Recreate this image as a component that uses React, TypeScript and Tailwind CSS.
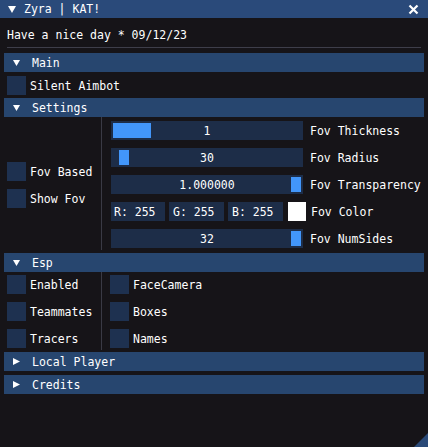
import React from 'react';

type SliderProps = { value: string; label: string; grabLeft: number; grabWidth: number };

const Slider: React.FC<SliderProps> = ({ value, label, grabLeft, grabWidth }) => (
  <div className="flex items-center h-[19px]">
    <div className="relative w-[192px] h-[19px] bg-[#1d2d48] flex items-center justify-center">
      <div
        className="absolute top-[2px] h-[15px] bg-[#4296fa]"
        style={{ left: grabLeft, width: grabWidth }}
      ></div>
      <span className="relative">{value}</span>
    </div>
    <span className="ml-[7px] whitespace-nowrap">{label}</span>
  </div>
);

const Checkbox: React.FC<{ label: string }> = ({ label }) => (
  <div className="flex items-center h-[19px]">
    <div className="w-[19px] h-[19px] bg-[#1e3150] shrink-0"></div>
    <span className="ml-[4px] whitespace-nowrap">{label}</span>
  </div>
);

const Header: React.FC<{ title: string; open?: boolean; className?: string }> = ({ title, open, className }) => (
  <div className={`-mx-[3px] h-[19px] bg-[#27466f] flex items-center pl-[9px] ${className ?? ''}`}>
    {open ? (
      <svg width="7" height="6" viewBox="0 0 7 6">
        <polygon points="0,0 7,0 3.5,6" fill="#fff" />
      </svg>
    ) : (
      <svg width="7" height="7" viewBox="0 0 7 7">
        <polygon points="0,0 7,3.5 0,7" fill="#fff" />
      </svg>
    )}
    <span className="ml-[12px]">{title}</span>
  </div>
);

const App: React.FC = () => {
  return (
    <div className="relative w-[428px] h-[447px] overflow-hidden bg-[#161418] text-white text-[11.5px] leading-[16px] font-['DejaVu_Sans_Mono',monospace]">
      {/* title bar */}
      <div className="flex items-center h-[18px] bg-[#2a4a7a] pl-[8px] pr-[8px]">
        <svg width="8" height="7" viewBox="0 0 8 7">
          <polygon points="0,0 8,0 4,7" fill="#fff" />
        </svg>
        <span className="ml-[8px]">Zyra | KAT!</span>
        <div className="flex-1"></div>
        <svg width="11" height="11" viewBox="0 0 11 11" className="mr-[1px]">
          <path d="M1.5 1.5 L9.5 9.5 M9.5 1.5 L1.5 9.5" stroke="#fff" strokeWidth="2.2" />
        </svg>
      </div>

      <div className="px-[7px] pt-[9px]">
        <div className="h-[16px]">Have a nice day * 09/12/23</div>
        <div className="mt-[4px] h-px bg-[#3e3e4a]"></div>

        <Header title="Main" open className="mt-[5px]" />
        <div className="mt-[4px]">
          <Checkbox label="Silent Aimbot" />
        </div>

        <Header title="Settings" open className="mt-[3px]" />
        <div className="flex">
          <div className="w-[94px] pt-[45px] flex flex-col gap-[8px]">
            <Checkbox label="Fov Based" />
            <Checkbox label="Show Fov" />
          </div>
          <div className="w-px bg-[#3a3a45]"></div>
          <div className="pl-[9px] pt-[4px] pb-[2px] flex flex-col gap-[8px]">
            <Slider value="1" label="Fov Thickness" grabLeft={2} grabWidth={38} />
            <Slider value="30" label="Fov Radius" grabLeft={8} grabWidth={10} />
            <Slider value="1.000000" label="Fov Transparency" grabLeft={180} grabWidth={10} />
            <div className="flex items-center h-[19px]">
              <div className="w-[54px] h-[19px] bg-[#1d2d48] pl-[3px] flex items-center">R: 255</div>
              <div className="ml-[4px] w-[55px] h-[19px] bg-[#1d2d48] pl-[4px] flex items-center">G: 255</div>
              <div className="ml-[4px] w-[55px] h-[19px] bg-[#1d2d48] pl-[4px] flex items-center">B: 255</div>
              <div className="ml-[5px] w-[18px] h-[19px] bg-white"></div>
              <span className="ml-[5px]">Fov Color</span>
            </div>
            <Slider value="32" label="Fov NumSides" grabLeft={180} grabWidth={10} />
          </div>
        </div>

        <Header title="Esp" open className="mt-[3px]" />
        <div className="flex">
          <div className="w-[94px] pt-[3px] pb-[2px] flex flex-col gap-[8px]">
            <Checkbox label="Enabled" />
            <Checkbox label="Teammates" />
            <Checkbox label="Tracers" />
          </div>
          <div className="w-px bg-[#3a3a45]"></div>
          <div className="pl-[8px] pt-[3px] pb-[2px] flex flex-col gap-[8px]">
            <Checkbox label="FaceCamera" />
            <Checkbox label="Boxes" />
            <Checkbox label="Names" />
          </div>
        </div>

        <Header title="Local Player" className="mt-[2px]" />
        <Header title="Credits" className="mt-[4px]" />
      </div>

      {/* resize grip */}
      <svg width="14" height="14" viewBox="0 0 14 14" className="absolute right-0 bottom-0">
        <polygon points="14,0 14,14 0,14" fill="#2a4a78" />
      </svg>
    </div>
  );
};

export default App;
